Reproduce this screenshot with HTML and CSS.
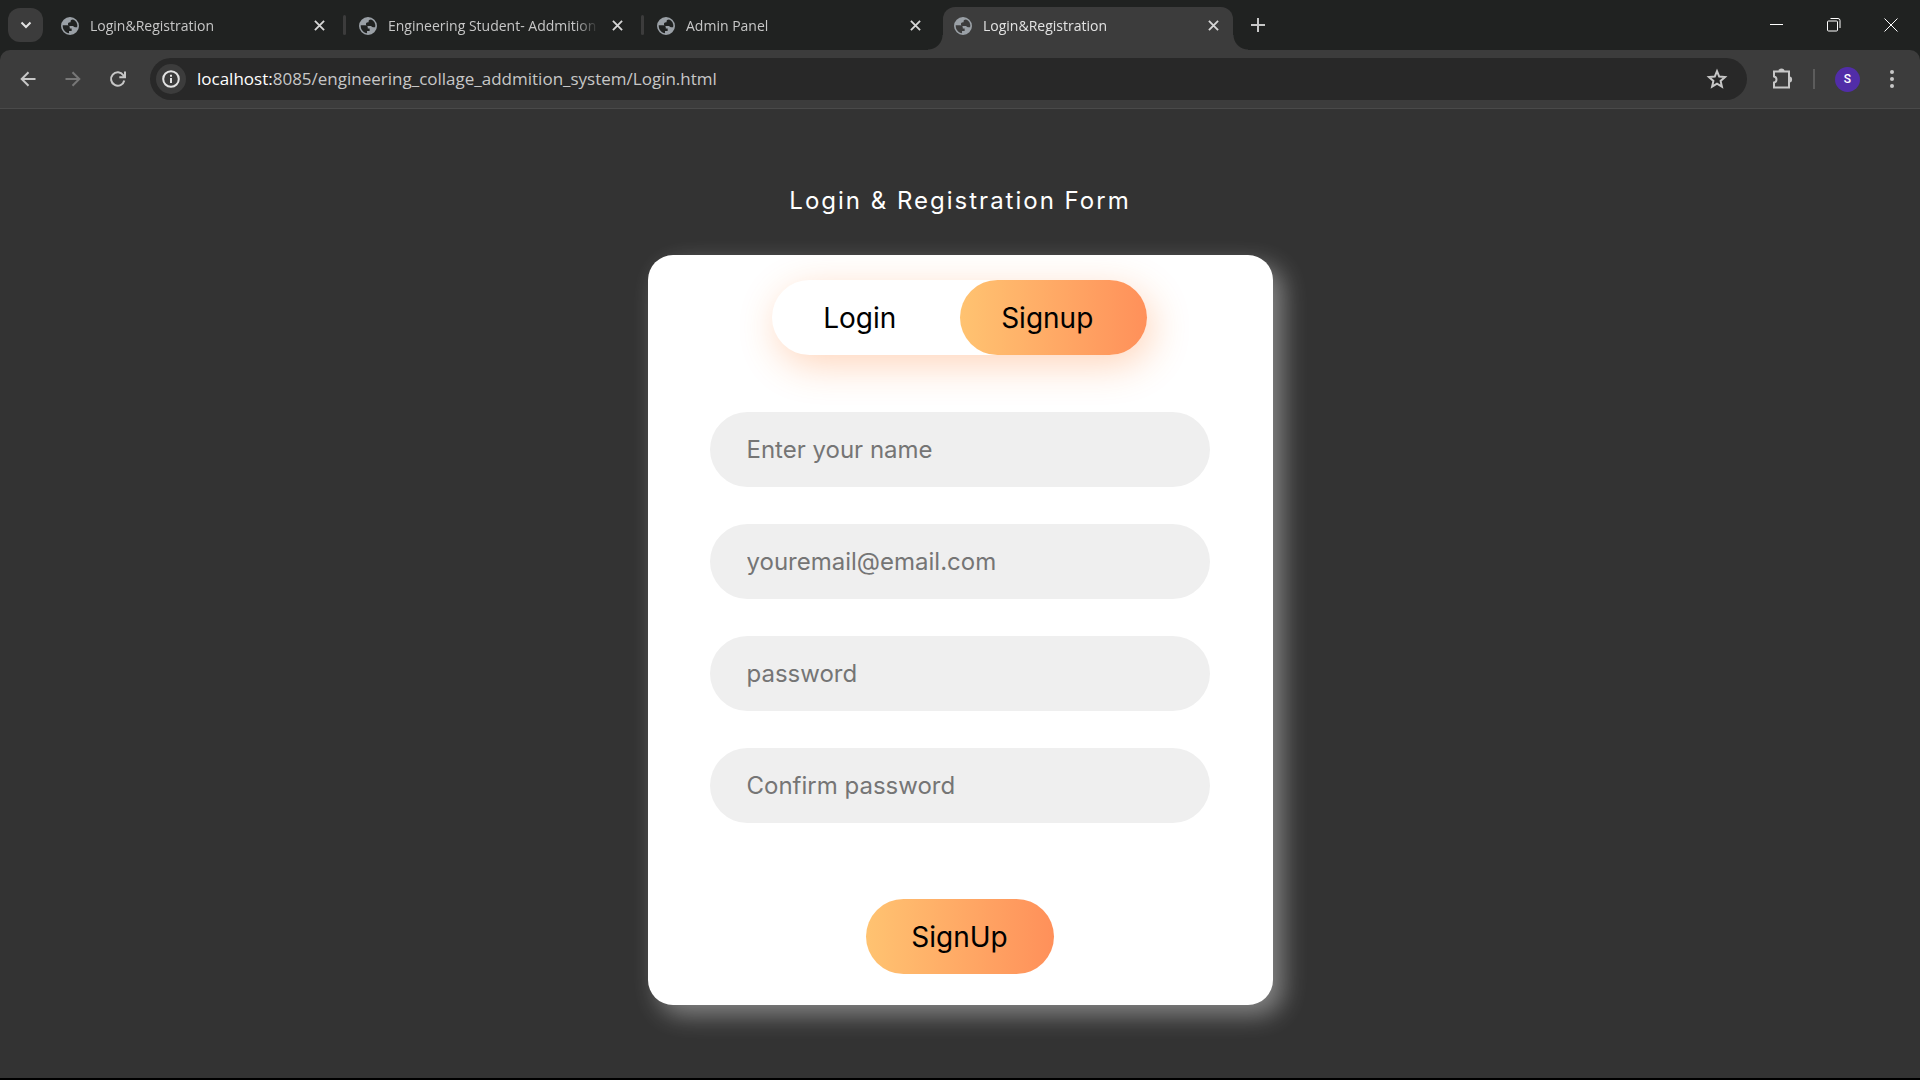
FILE: index.html
```html
<!DOCTYPE html>
<html lang="en">
<head>
<meta charset="utf-8">
<title>Login&amp;Registration</title>
<link rel="stylesheet" href="styles.css">
</head>
<body>
<svg class="defs" aria-hidden="true">
  <symbol id="globe" viewBox="0 0 24 24"><path fill-rule="evenodd" d="M12 0a12 12 0 1 0 0 24 12 12 0 0 0 0-24zM2.300 11H8.500c2 0 3.200 1.300 3.200 3v1.200h2.500v3.300h-3.500v3.100C6 21 2.300 17 2.300 12zM15.500 2.900A9.700 9.700 0 0 1 21.500 13.500h-2.800c-1.400 0-2-.6-2.400-1.500h-4.500c-1.700 0-2.500-1-2.500-2.500S10.300 7 11.800 7h1V5.500c0-1.400 1.200-2 2.700-2z"/></symbol>
  <symbol id="cross" viewBox="0 0 12 12"><path d="M1 1l10 10M11 1L1 11"/></symbol>
</svg>

<header class="browser">
  <div class="tab-strip">
    <button class="tab-search" aria-label="Search tabs"><svg viewBox="0 0 12 8"><path d="M1.500 1.500L6 6l4.500-4.500"/></svg></button>
    <nav class="tabs">
      <div class="tab"><svg class="globe"><use href="#globe"/></svg><span class="tab-title">Login&amp;Registration</span><button class="tab-close" aria-label="Close tab"><svg><use href="#cross"/></svg></button></div>
      <div class="tab divided"><svg class="globe"><use href="#globe"/></svg><span class="tab-title">Engineering Student- Addmition</span><button class="tab-close" aria-label="Close tab"><svg><use href="#cross"/></svg></button></div>
      <div class="tab divided"><svg class="globe"><use href="#globe"/></svg><span class="tab-title">Admin Panel</span><button class="tab-close" aria-label="Close tab"><svg><use href="#cross"/></svg></button></div>
      <div class="tab active"><svg class="globe"><use href="#globe"/></svg><span class="tab-title">Login&amp;Registration</span><button class="tab-close" aria-label="Close tab"><svg><use href="#cross"/></svg></button></div>
    </nav>
    <button class="new-tab" aria-label="New tab"><svg viewBox="0 0 14 14"><path d="M7 0v14M0 7h14"/></svg></button>
    <div class="window-controls">
      <button aria-label="Minimize"><svg viewBox="0 0 14 14"><path d="M0 6.500h13"/></svg></button>
      <button aria-label="Restore"><svg viewBox="0 0 14 14"><rect x=".5" y="3" width="10" height="10" rx="1"/><path d="M3.500.5H11a2 2 0 0 1 2 2V10"/></svg></button>
      <button aria-label="Close"><svg viewBox="0 0 14 14"><path d="M.5.5l13 13M13.500.5l-13 13"/></svg></button>
    </div>
  </div>

  <div class="toolbar">
    <div class="nav-buttons">
      <button aria-label="Back"><svg viewBox="0 0 16 16"><path d="M15.500 8H2M8.500 1.200L1.700 8l6.800 6.800"/></svg></button>
      <button class="disabled" aria-label="Forward"><svg viewBox="0 0 16 16"><path d="M.5 8H14M7.500 1.200L14.300 8l-6.800 6.800"/></svg></button>
      <button aria-label="Reload"><svg viewBox="0 0 16 16"><path d="M14.300 9.500A6.700 6.700 0 1 1 13.300 4.200L14.500 6M15 .5V6.300H9.300"/></svg></button>
    </div>
    <div class="omnibox">
      <button class="site-info" aria-label="View site information"><svg viewBox="0 0 18 18"><circle cx="9" cy="9" r="7.800"/><path d="M9 8v5M9 4.800v2"/></svg></button>
      <span class="url"><b>localhost:</b>8085/engineering_collage_addmition_system/Login.html</span>
      <button class="bookmark" aria-label="Bookmark this tab"><svg viewBox="0 0 20 20"><path d="M10 2.200l2.200 5.400 5.800.5-4.400 3.800 1.300 5.700L10 14.600l-4.900 3 1.300-5.700L2 8.100l5.800-.5z"/></svg></button>
    </div>
    <div class="tools">
      <button aria-label="Extensions"><svg class="puzzle" viewBox="0 0 22 22"><path d="M3 3.500H18V19.500H3V14.500C6.300 14 6.300 9 3 8.500z"/><path class="nub" d="M7.500 3a3 2.600 0 0 1 6 0zM18.500 8.500a2.600 3 0 0 1 0 6z"/></svg></button>
      <span class="tool-divider"></span>
      <button class="avatar" aria-label="Profile">S</button>
      <button aria-label="Menu"><svg class="dots" viewBox="0 0 4 18"><circle cx="2" cy="2" r="2"/><circle cx="2" cy="9" r="2"/><circle cx="2" cy="16" r="2"/></svg></button>
    </div>
  </div>
</header>

<main class="page">
  <h1>Login &amp; Registration Form</h1>
  <section class="card">
    <div class="toggle">
      <button type="button">Login</button>
      <button type="button" class="selected">Signup</button>
    </div>
    <form>
      <input type="text" placeholder="Enter your name" aria-label="Name">
      <input type="email" placeholder="youremail@email.com" aria-label="Email">
      <input type="password" placeholder="password" aria-label="Password">
      <input type="password" placeholder="Confirm password" aria-label="Confirm password">
      <button type="submit" class="submit">SignUp</button>
    </form>
  </section>
</main>
</body>
</html>
```
FILE: styles.css
```css
* { box-sizing: border-box; }
body {
  margin: 0;
  min-height: 100vh;
  display: flex;
  flex-direction: column;
  background: #333;
  border-bottom: 2px solid #000;
  font-family: "Open Sans", "Noto Sans", sans-serif;
}
button, input { font: inherit; border: 0; padding: 0; margin: 0; }
button {
  display: flex;
  align-items: center;
  justify-content: center;
  background: none;
  color: inherit;
}
svg { display: block; fill: none; stroke: currentColor; stroke-width: 2; overflow: visible; }
.defs { position: absolute; width: 0; height: 0; }

/* Tab strip */
.browser { background: #202221; color: #c7c7c7; }
.tab-strip { display: flex; height: 50px; padding-left: 8px; }
.tab-search {
  width: 35px;
  height: 34px;
  margin-top: 8px;
  border-radius: 12px;
  background: #3c3c3c;
  color: #e3e3e3;
}
.tab-search svg { width: 12px; height: 8px; }
.tabs { display: flex; margin-left: 5px; }
.tab {
  position: relative;
  display: flex;
  align-items: center;
  width: 298px;
  height: 43px;
  margin-top: 7px;
  padding: 0 17px 6px 13px;
  font-size: 14px;
}
.tab.divided::before {
  content: "";
  position: absolute;
  left: -3px;
  top: 8px;
  width: 3px;
  height: 20px;
  border-radius: 2px;
  background: #3c3c3c;
}
.globe { flex: none; width: 18px; height: 18px; fill: #9aa0a6; stroke: none; }
.tab-title {
  flex: 1;
  min-width: 0;
  margin: 0 8px 0 11px;
  overflow: hidden;
  white-space: nowrap;
  line-height: 20px;
  -webkit-mask-image: linear-gradient(to right, #000 calc(100% - 24px), transparent);
  mask-image: linear-gradient(to right, #000 calc(100% - 24px), transparent);
}
.tab-close { flex: none; width: 20px; height: 20px; color: #d6d6d6; }
.tab-close svg { width: 11px; height: 11px; }
.tab.active {
  width: 290px;
  margin-left: 1px;
  padding: 0 10px 6px 11px;
  background: #3c3c3c;
  color: #e3e3e3;
  border-radius: 12px 12px 0 0;
}
.tab.active::before, .tab.active::after {
  content: "";
  position: absolute;
  bottom: 0;
  width: 15px;
  height: 15px;
}
.tab.active::before { right: 100%; background: radial-gradient(circle at 0 0, transparent 14px, #3c3c3c 15px); }
.tab.active::after { left: 100%; background: radial-gradient(circle at 100% 0, transparent 14px, #3c3c3c 15px); }
.new-tab { width: 50px; height: 50px; }
.new-tab svg { width: 14px; height: 14px; }
.window-controls { display: flex; margin-left: auto; padding-right: 1px; color: #fff; }
.window-controls button { width: 57px; height: 50px; }
.window-controls svg { width: 14px; height: 14px; stroke-width: 1; }

/* Toolbar */
.toolbar {
  display: flex;
  align-items: center;
  height: 59px;
  padding: 0 20px 0 5px;
  background: #3c3c3c;
  border-bottom: 1px solid #4a4a4a;
  border-radius: 10px 10px 0 0;
}
.nav-buttons { display: flex; }
.nav-buttons button { width: 45px; height: 42px; }
.nav-buttons svg { width: 16px; height: 16px; }
.nav-buttons .disabled { color: #777; }
.omnibox {
  flex: 1;
  display: flex;
  align-items: center;
  height: 42px;
  margin-left: 10px;
  padding: 0 20px 0 6px;
  border-radius: 21px;
  background: #282828;
}
.site-info { width: 30px; height: 30px; border-radius: 50%; background: #3c3c3c; color: #e3e3e3; }
.site-info svg { width: 18px; height: 18px; }
.url { flex: 1; margin-left: 11px; font-size: 17px; line-height: 24px; white-space: nowrap; }
.url b { font-weight: 400; color: #fff; }
.bookmark svg { width: 20px; height: 20px; }
.tools { display: flex; align-items: center; margin-left: 24px; }
.puzzle { width: 22px; height: 22px; }
.puzzle .nub { fill: currentColor; stroke: none; }
.tool-divider { width: 2px; height: 20px; margin: 0 20px; background: #5c5c5c; }
.avatar {
  width: 25px;
  height: 25px;
  border-radius: 50%;
  background: #512da8;
  color: #fff;
  font: 500 12px Roboto, sans-serif;
}
.tools button:last-child { width: 16px; height: 30px; margin-left: 24px; }
.dots { width: 4px; height: 18px; fill: currentColor; stroke: none; }

/* Form page */
.page {
  flex: 1;
  display: flex;
  flex-direction: column;
  align-items: center;
  padding: 72px 20px;
  font-family: Inter, "Open Sans", sans-serif;
}
h1 {
  margin: 0 0 34px;
  color: #fff;
  font-size: 24px;
  font-weight: 400;
  line-height: 40px;
  letter-spacing: 2px;
}
.card {
  width: 100%;
  max-width: 625px;
  padding: 25px 63px 31px 62px;
  border-radius: 25px;
  background: #fff;
  box-shadow: 10px 10px 25px rgba(255, 255, 255, .4);
}
.toggle {
  display: flex;
  max-width: 375px;
  margin: 0 auto;
  border-radius: 38px;
  box-shadow: 5px 10px 38px rgba(255, 117, 30, .3);
  background: #fff;
}
.toggle button, .submit {
  height: 75px;
  border-radius: 38px;
  color: #000;
  font-size: 28px;
}
.toggle button { flex: 1; padding-right: 12px; }
.selected, .submit { background: linear-gradient(to right, #ffc371, #ff905a); }
form { display: flex; flex-direction: column; gap: 37px; margin-top: 57px; }
input {
  width: 100%;
  height: 75px;
  padding: 0 37px;
  border-radius: 38px;
  background: #efefef;
  font-size: 24px;
}
input::placeholder { color: #757575; opacity: 1; }
.submit { width: 188px; margin: 39px auto 0; }
```
